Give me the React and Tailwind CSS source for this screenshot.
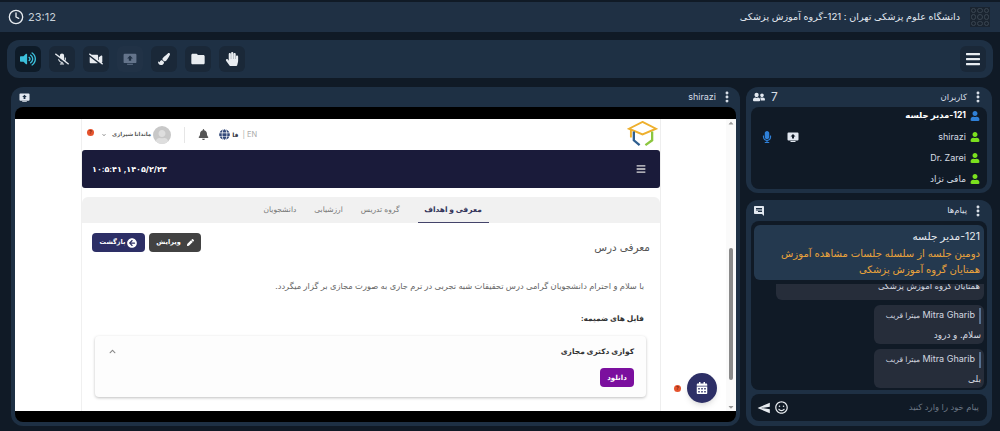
import { Clock, Ellipsis } from 'lucide-react';
import {
  FaVolumeUp,
  FaMicrophoneSlash,
  FaVideoSlash,
  FaPaintBrush,
  FaHandPaper,
  FaBars,
  FaUserFriends,
  FaUser,
  FaMicrophone,
  FaBell,
  FaGlobe,
  FaPen,
  FaArrowCircleLeft,
  FaCalendarAlt,
  FaChevronUp,
  FaChevronDown,
  FaRegSmile,
  FaCaretUp,
  FaCaretDown,
} from 'react-icons/fa';
import { MdFolder, MdSend, MdChat } from 'react-icons/md';

const font = "font-['Inter','DejaVu_Sans',sans-serif]";

const users = [
  { name: '121-مدیر جلسه', color: 'text-[#2f80d8]', bold: true },
  { name: 'shirazi', color: 'text-[#7be01e]', badges: true },
  { name: 'Dr. Zarei', color: 'text-[#7be01e]' },
  { name: 'مافی نژاد', color: 'text-[#7be01e]' },
];

const tabs = ['معرفی و اهداف', 'گروه تدریس', 'ارزشیابی', 'دانشجویان'];

function ShareIcon({ className }) {
  return (
    <svg viewBox="0 0 24 24" className={className} fill="currentColor">
      <path d="M3 3h18a2 2 0 0 1 2 2v12a2 2 0 0 1-2 2H3a2 2 0 0 1-2-2V5a2 2 0 0 1 2-2zm9 3-5 5h3v4h4v-4h3zM7 20h10v2H7z" fillRule="evenodd" />
    </svg>
  );
}

function Dots() {
  return <Ellipsis className="h-3.5 w-3.5 rotate-90 text-[#e2e8f0]" strokeWidth={3} />;
}

function HelpDot() {
  return (
    <span className="flex h-[7px] w-[7px] items-center justify-center rounded-full bg-[#e5532d] text-[5px] font-bold text-[#7a2412]">?</span>
  );
}

function ToolButton({ children, active, disabled }) {
  return (
    <button
      className={`flex h-[26px] w-[26px] items-center justify-center rounded-md ${
        active ? 'bg-[#0e1b28] text-[#3cc0dc]' : disabled ? 'bg-[#213246] text-[#64748b]' : 'bg-[#1a2838] text-[#e8ecf0]'
      }`}
    >
      {children}
    </button>
  );
}

function Logo() {
  return (
    <svg viewBox="0 0 30 28" className="h-[27px] w-[31px]" fill="none">
      <path d="M15 1 29 8l-14 6L1 8z" stroke="#eeb02e" strokeWidth="2" />
      <path d="M3 9v8" stroke="#eeb02e" strokeWidth="2" />
      <path d="M6 11v9l6 5" stroke="#2f5f8f" strokeWidth="2.4" />
      <path d="M25 11v9l-7 5" stroke="#8cc63f" strokeWidth="2.4" />
    </svg>
  );
}

function ScreenShare() {
  return (
    <div className="flex h-full flex-col bg-black">
      <div className="h-3 shrink-0" />
      <div className="relative flex min-h-0 flex-1 bg-white">
        <div className="w-[66px] shrink-0" />
        <div className="w-[579px] shrink-0 overflow-hidden border-l border-[#f0f0f0]">
          {/* site header */}
          <div dir="ltr" className="flex h-[31px] items-center justify-between">
            <div className="flex items-center pl-[20px] text-[#555]">
              <FaChevronDown className="mr-1.5 h-1 w-1 text-[#888]" />
              <span dir="rtl" className="text-[5.5px] font-bold">ماندانا شیرازی</span>
              <div className="ml-0.5 flex h-[18px] w-[18px] items-end justify-center overflow-hidden rounded-full bg-[#c8c8c8]">
                <FaUser className="h-3.5 w-3.5 text-[#dedede]" />
              </div>
              <div className="mx-[13px] h-4 w-px bg-[#e6e6e6]" />
              <FaBell className="h-[11px] w-[11px] text-[#555]" />
              <FaGlobe className="ml-2.5 h-[11px] w-[11px] text-[#344a7a]" />
              <span className="ml-0.5 text-[6px] font-bold text-[#334]">فا</span>
              <span className="ml-1 text-[7.5px] text-[#aaa]">| EN</span>
            </div>
            <div className="pr-0.5">
              <Logo />
            </div>
          </div>

          {/* dark bar */}
          <div className="flex h-[38px] items-center justify-between rounded-[3px] bg-[#1a1b3a] pr-3.5 pl-2.5 text-white">
            <span className="text-[8px] font-bold">۱۰:۵:۴۱ ,۱۴۰۵/۲/۲۳</span>
            <FaBars className="h-2.5 w-2.5 text-[#ddd]" />
          </div>

          {/* tabs */}
          <div dir="rtl" className="mt-[9px] flex h-[26px] justify-center gap-[18px] rounded-t-md bg-[#f1f1f1] pl-[10px] text-[7.5px] whitespace-nowrap text-[#777]">
            {tabs.map((tab, i) => (
              <div
                key={tab}
                className={`flex items-center ${i === 0 ? 'w-[71px] justify-center border-b border-[#44446a] font-bold text-[#33345a]' : ''}`}
              >
                {tab}
              </div>
            ))}
          </div>

          {/* body */}
          <div dir="rtl" className="pr-2.5 pl-2.5">
            <div className="flex items-start justify-between pt-2.5">
              <h2 className="pt-[7px] text-[10.5px] leading-4 text-[#555]">معرفی درس</h2>
              <div dir="ltr" className="flex gap-1">
                <button className="flex h-[19px] w-[53px] items-center justify-center gap-0.5 rounded-sm bg-[#2d2f66] text-[6.5px] font-bold text-white">
                  <span>بازگشت</span>
                  <FaArrowCircleLeft className="h-2.5 w-2.5" />
                </button>
                <button className="flex h-[19px] w-[52px] items-center justify-center gap-1.5 rounded-sm bg-[#424242] text-[6.5px] font-bold text-white">
                  <span>ویرایش</span>
                  <FaPen className="h-[7px] w-[7px]" />
                </button>
              </div>
            </div>
            <p className="mt-[22px] pr-1.5 text-[8.3px] leading-4 text-[#666]">
              با سلام و احترام دانشجویان گرامی درس تحقیقات شبه تجربی در ترم جاری به صورت مجازی بر گزار میگردد.
            </p>
            <p className="mt-[17px] pr-1.5 text-[7.5px] font-bold leading-4 text-[#333]">فایل های ضمیمه:</p>
            <div className="mt-[9px] mr-1 ml-[3px] h-[61px] rounded-sm bg-[#fdfdfd] px-3 pt-2.5 shadow-[0_1px_3px_rgba(0,0,0,0.25)]">
              <div className="flex items-center justify-between">
                <span className="text-[7.5px] font-bold text-[#333]">کوازی دکتری مجازی</span>
                <FaChevronUp className="ml-[2px] h-[7px] w-[7px] text-[#888]" />
              </div>
              <button className="mt-[11px] flex h-[19px] w-[34px] items-center justify-center rounded-sm bg-[#7b0f9e] text-[7px] font-bold text-white">
                دانلود
              </button>
            </div>
          </div>
        </div>
        <div className="flex-1 border-l border-[#eeeeee]" />

        {/* scrollbar */}
        <div className="flex w-[10px] shrink-0 flex-col items-center bg-[#fafafa] text-[#999]">
          <FaCaretUp className="h-2 w-2" />
          <div className="mt-[121px] h-[132px] w-1 rounded-full bg-[#8a8a8a]" />
          <FaCaretDown className="mt-auto h-2 w-2" />
        </div>

        {/* floating */}
        <div className="absolute top-[10px] left-[72px]"><HelpDot /></div>
        <div className="absolute bottom-[19px] left-[659px]"><HelpDot /></div>
        <button className="absolute right-[19px] bottom-[8px] flex h-[30px] w-[30px] items-center justify-center rounded-full bg-[#2d2f66] text-white shadow-md">
          <FaCalendarAlt className="h-3 w-3" />
        </button>
      </div>
      <div className="h-[11px] shrink-0" />
    </div>
  );
}

function UsersPanel() {
  return (
    <section className="flex h-[106px] flex-col rounded-xl bg-[#1e3044] px-[5px] pb-1">
      <div className="flex h-5 shrink-0 items-center justify-between pr-0.5 pl-0.5 text-[#d7dde4]">
        <div className="flex items-center gap-1.5 text-[12px]">
          <FaUserFriends className="h-3 w-3 text-[#e2e8f0]" />
          <span>7</span>
        </div>
        <div dir="rtl" className="flex items-center gap-1 text-[8.5px]">
          <Dots />
          <span>کاربران</span>
        </div>
      </div>
      <div className="flex flex-1 flex-col rounded-lg bg-[#101a26] pr-[7px]">
        {users.map((u, i) => (
          <div key={u.name} className={`flex h-[21px] items-center justify-between ${i === 0 ? '-mt-[2px]' : ''}`}>
            <div className="flex items-center pl-2.5">
              {u.badges && (
                <>
                  <FaMicrophone className="h-3 w-3 text-[#2f80d8]" />
                  <ShareIcon className="ml-[14px] h-3 w-3 text-[#e2e8f0]" />
                </>
              )}
            </div>
            <div className="flex items-center gap-1">
              <span dir="rtl" className={`${u.bold ? 'text-[8.5px] font-bold text-white' : 'text-[9px] text-[#d7dde4]'}`}>
                {u.name}
              </span>
              <FaUser className={`h-2.5 w-2.5 ${u.color}`} />
            </div>
          </div>
        ))}
      </div>
    </section>
  );
}

function Bubble({ body }) {
  return (
    <div className="h-[39px] w-[110px] rounded-md bg-[#262d3a] px-[3px] pt-[2px] text-[#d4d9e0]">
      <div dir="rtl" className="flex items-center gap-1 whitespace-nowrap">
        <span className="h-4 w-[2px] shrink-0 bg-[#56708f]" />
        <span className="text-[9px] leading-4">Mitra Gharib <span className="text-[7.5px]">میترا قریب</span></span>
      </div>
      <p dir="rtl" className="mt-[3px] text-[9px] leading-4">{body}</p>
    </div>
  );
}

function MessagesPanel() {
  return (
    <section className="flex min-h-0 flex-1 flex-col rounded-xl bg-[#1e3044] px-[5px] pb-[5px]">
      <div className="flex h-[21px] shrink-0 items-center justify-between pr-0.5 pl-0.5 text-[#d7dde4]">
        <MdChat className="h-3 w-3 -scale-x-100 text-[#e2e8f0]" />
        <div dir="rtl" className="flex items-center gap-1 text-[8.5px]">
          <Dots />
          <span>پیام‌ها</span>
        </div>
      </div>
      <div className="relative min-h-0 flex-1 overflow-hidden rounded-lg bg-[#101a26]">
        <div className="flex h-full flex-col items-end justify-end gap-[5px] pr-[3px] pb-[2px]">
          <div dir="rtl" className="h-[16px] w-[208px] shrink-0 overflow-hidden rounded-b-md bg-[#262d3a] pr-1 text-[8.5px] leading-4 text-[#d4d9e0]">
            <p className="-mt-[6px]">همتایان گروه آموزش پزشکی</p>
          </div>
          <Bubble body="سلام. و درود" />
          <Bubble body="بلی" />
        </div>
        <div dir="rtl" className="absolute top-[4px] right-[3px] left-[3px] h-[55px] rounded-md bg-[#24394f] px-1 pt-1 leading-4">
          <p className="text-[10.5px] text-[#e6eaef]">121-مدیر جلسه</p>
          <p className="text-[10.1px] text-[#e8a23c]">دومین جلسه از سلسله جلسات مشاهده آموزش همتایان گروه آموزش پزشکی</p>
        </div>
      </div>
      <div className="mt-1 flex h-[27px] shrink-0 items-center rounded-lg bg-[#101a26] px-1.5">
        <MdSend className="h-3.5 w-3.5 rotate-180 text-[#e8ecf0]" />
        <FaRegSmile className="ml-1 h-[13px] w-[13px] text-[#e8ecf0]" />
        <span dir="rtl" className="flex-1 pr-0.5 text-[8.5px] text-[#6b7684]">پیام خود را وارد کنید</span>
      </div>
    </section>
  );
}

export default function App() {
  return (
    <div className={`flex h-[431px] w-[1000px] flex-col overflow-hidden bg-[#101a26] pt-[2px] ${font}`}>
      {/* top bar */}
      <header className="flex h-[30px] shrink-0 items-center justify-between bg-[#1f3044] pr-[10px] pl-2 text-[#e2e8f0]">
        <div className="flex items-center gap-1 text-[11px] text-[#c8d0d9]">
          <Clock className="h-4 w-4 text-[#e8ecf0]" />
          <span>23:12</span>
        </div>
        <div className="flex items-center gap-[10px]">
          <span dir="rtl" className="text-[9.6px]">دانشگاه علوم پزشکی تهران : 121-گروه آموزش پزشکی</span>
          <div className="grid h-5 w-5 grid-cols-3 gap-px bg-[#1a2430] p-px">
            {Array.from({ length: 9 }).map((_, i) => (
              <span key={i} className="rounded-full border border-[#3a4652]" />
            ))}
          </div>
        </div>
      </header>

      {/* toolbar */}
      <div className="mx-[7px] mt-2 flex h-[38px] shrink-0 items-center justify-between rounded-xl bg-[#1e3044] pr-[7px] pl-2">
        <div className="flex gap-2">
          <ToolButton active><FaVolumeUp className="h-4 w-4" /></ToolButton>
          <ToolButton><FaMicrophoneSlash className="h-3.5 w-3.5" /></ToolButton>
          <ToolButton><FaVideoSlash className="h-3.5 w-3.5" /></ToolButton>
          <ToolButton disabled><ShareIcon className="h-3.5 w-3.5" /></ToolButton>
          <ToolButton><FaPaintBrush className="h-3 w-3" /></ToolButton>
          <ToolButton><MdFolder className="h-4 w-4" /></ToolButton>
          <ToolButton><FaHandPaper className="h-3.5 w-3.5" /></ToolButton>
        </div>
        <ToolButton><FaBars className="h-4 w-4" /></ToolButton>
      </div>

      {/* main */}
      <div className="mt-[9px] flex min-h-0 flex-1 gap-1.5 pr-2 pb-[5px] pl-[11px]">
        <section className="flex w-[729px] shrink-0 flex-col rounded-t-xl rounded-b-xl bg-[#1e3044] px-[4px] pb-[4px]">
          <div className="flex h-5 shrink-0 items-center justify-between pr-0.5 pl-1 text-[#d7dde4]">
            <ShareIcon className="h-[11px] w-[11px] text-[#e2e8f0]" />
            <div className="flex items-center gap-1 text-[9px]">
              <span>shirazi</span>
              <Dots />
            </div>
          </div>
          <div className="min-h-0 flex-1 overflow-hidden rounded-lg">
            <ScreenShare />
          </div>
        </section>
        <aside className="flex min-w-0 flex-1 flex-col gap-[7px]">
          <UsersPanel />
          <MessagesPanel />
        </aside>
      </div>
    </div>
  );
}
